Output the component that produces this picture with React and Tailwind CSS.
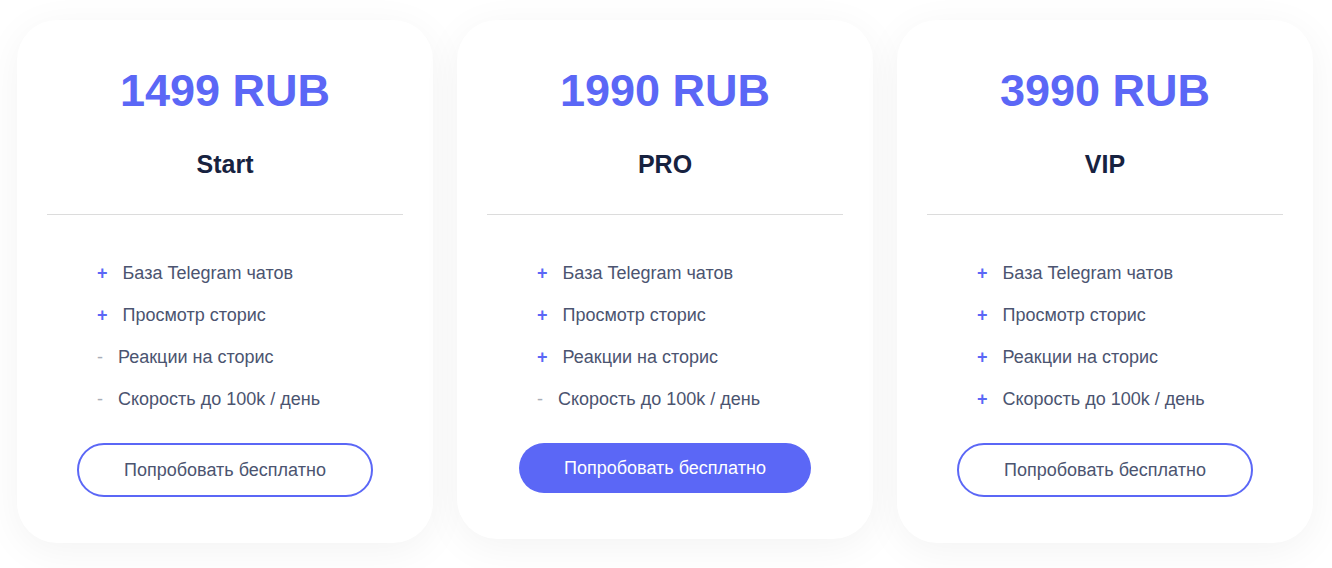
import React from 'react';

const PLANS = [
    {
        price: '1499 RUB',
        name: 'Start',
        features: [
            { on: true, label: 'База Telegram чатов' },
            { on: true, label: 'Просмотр сторис' },
            { on: false, label: 'Реакции на сторис' },
            { on: false, label: 'Скорость до 100k / день' },
        ],
        featured: false,
    },
    {
        price: '1990 RUB',
        name: 'PRO',
        features: [
            { on: true, label: 'База Telegram чатов' },
            { on: true, label: 'Просмотр сторис' },
            { on: true, label: 'Реакции на сторис' },
            { on: false, label: 'Скорость до 100k / день' },
        ],
        featured: true,
    },
    {
        price: '3990 RUB',
        name: 'VIP',
        features: [
            { on: true, label: 'База Telegram чатов' },
            { on: true, label: 'Просмотр сторис' },
            { on: true, label: 'Реакции на сторис' },
            { on: true, label: 'Скорость до 100k / день' },
        ],
        featured: false,
    },
];

function PlanCard({ plan }) {
    return (
        <div className="w-[416px] bg-white rounded-[40px] shadow-[0_8px_40px_rgba(0,0,0,0.05)] px-[30px] pt-[44px] pb-[46px] flex flex-col">
            {/* Price + name */}
            <div className="text-center text-[45px] leading-[54px] font-bold text-[#5b67f6]">
                {plan.price}
            </div>
            <div className="mt-[31px] text-center text-[25px] leading-[30px] font-bold text-[#172240]">
                {plan.name}
            </div>

            <div className="mt-[35px] h-px bg-[#dcdcdc]" />

            {/* Features */}
            <ul className="mt-[37px] pl-[50px]">
                {plan.features.map((f, i) => (
                    <li key={i} className="h-[42px] flex items-center text-[18px] text-[#4b5470]">
                        {f.on ? (
                            <span className="text-[#5b67f6] font-bold mr-[15px]">+</span>
                        ) : (
                            <span className="text-[#a9adb8] mr-[15px]">-</span>
                        )}
                        {f.label}
                    </li>
                ))}
            </ul>

            {/* CTA */}
            <div className="mt-[23px] flex justify-center">
                {plan.featured ? (
                    <button className="w-[292px] h-[50px] rounded-full bg-[#5b67f6] text-white text-[18px]">
                        Попробовать бесплатно
                    </button>
                ) : (
                    <button className="w-[296px] h-[54px] rounded-full border-2 border-[#5b67f6] bg-white text-[#4b5470] text-[18px]">
                        Попробовать бесплатно
                    </button>
                )}
            </div>
        </div>
    );
}

export default function App() {
    return (
        <div className="w-[1332px] h-[568px] bg-white font-['Liberation_Sans',Arial,sans-serif] overflow-hidden">
            <div className="flex items-start gap-[24px] pt-[20px] pl-[17px]">
                {PLANS.map((plan) => (
                    <PlanCard key={plan.name} plan={plan} />
                ))}
            </div>
        </div>
    );
}
